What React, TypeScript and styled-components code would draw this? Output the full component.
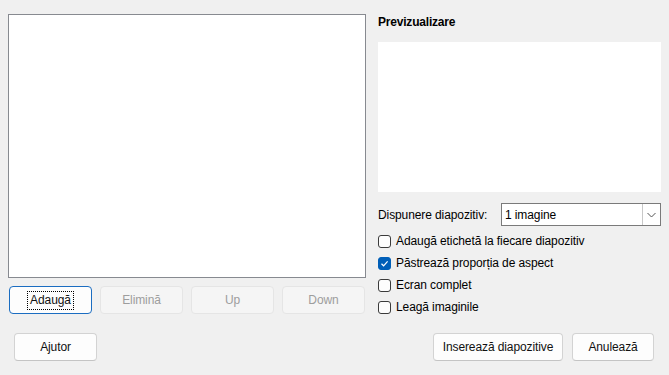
import React from "react";
import styled, { createGlobalStyle, css } from "styled-components";

const GlobalStyle = createGlobalStyle`
  html, body {
    margin: 0;
    padding: 0;
    background: #f0f0f0;
  }
  body {
    font-family: "Liberation Sans", Arial, sans-serif;
    font-size: 12px;
    letter-spacing: -0.1px;
    color: #000;
  }
`;

const Dialog = styled.div`
  width: 669px;
  height: 375px;
  box-sizing: border-box;
  background: #f0f0f0;
  display: flex;
  flex-direction: column;
`;

const Main = styled.div`
  display: flex;
  flex-direction: row;
  padding: 14px 8px 0 8px;
  gap: 12px;
`;

const LeftColumn = styled.div`
  width: 358px;
  display: flex;
  flex-direction: column;
  gap: 8px;
`;

const ListBox = styled.div`
  width: 358px;
  height: 264px;
  box-sizing: border-box;
  background: #fff;
  border: 1px solid #878a90;
`;

const ButtonRow = styled.div`
  display: flex;
  gap: 8px;
  padding-left: 1px;
`;

const Button = styled.button<{ $w?: number; $focused?: boolean }>`
  width: ${(p) => p.$w ?? 83}px;
  height: 28px;
  box-sizing: border-box;
  background: #fdfdfd;
  border: 1px solid #d3d3d3;
  border-bottom-color: #c4c4c4;
  border-radius: 4px;
  font-family: inherit;
  font-size: 12px;
  letter-spacing: inherit;
  color: #111;
  padding: 0;
  display: flex;
  align-items: center;
  justify-content: center;

  &:disabled {
    background: #f5f5f5;
    border-color: #e5e5e5;
    color: #9d9d9d;
  }

  ${(p) =>
    p.$focused &&
    css`
      border-color: #1b6dc1;
      span {
        outline: 1px dotted #000;
        outline-offset: 0px;
        padding: 2px 2px;
        line-height: 13px;
      }
    `}
`;

const RightColumn = styled.div`
  width: 283px;
  display: flex;
  flex-direction: column;
`;

const Title = styled.div`
  font-weight: bold;
  font-size: 12px;
  letter-spacing: -0.2px;
  margin-top: 1px;
  height: 27px;
`;

const Preview = styled.div`
  width: 283px;
  height: 150px;
  background: #fff;
`;

const LayoutRow = styled.div`
  display: flex;
  align-items: center;
  margin-top: 11px;
  height: 23px;
`;

const Label = styled.span`
  width: 123px;
`;

const Select = styled.div`
  width: 160px;
  height: 23px;
  box-sizing: border-box;
  background: #fff;
  border: 1px solid #7a7a7a;
  display: flex;
  align-items: center;
`;

const SelectValue = styled.span`
  flex: 1;
  padding-left: 3px;
`;

const SelectArrow = styled.span`
  width: 17px;
  height: 100%;
  border-left: 1px solid #c8c8c8;
  display: flex;
  align-items: center;
  justify-content: center;
`;

const Checks = styled.div`
  display: flex;
  flex-direction: column;
  margin-top: 4px;
`;

const CheckRow = styled.label`
  display: flex;
  align-items: center;
  height: 22px;
  gap: 5px;
`;

const Box = styled.span<{ $checked?: boolean }>`
  width: 13px;
  height: 13px;
  box-sizing: border-box;
  border-radius: 3px;
  border: 1px solid ${(p) => (p.$checked ? "#005fb8" : "#3b3b3b")};
  background: ${(p) => (p.$checked ? "#005fb8" : "#fdfdfd")};
  display: flex;
  align-items: center;
  justify-content: center;
`;

const Footer = styled.div`
  display: flex;
  justify-content: space-between;
  align-items: center;
  padding: 0 15px 0 14px;
  margin-top: auto;
  margin-bottom: 14px;
`;

const FooterRight = styled.div`
  display: flex;
  gap: 9px;
`;

function Check({ label, checked }: { label: string; checked?: boolean }) {
  return (
    <CheckRow>
      <Box $checked={checked}>
        {checked && (
          <svg width="9" height="9" viewBox="0 0 9 9">
            <path d="M1.5 4.8 L3.6 6.8 L7.6 2.4" fill="none" stroke="#fff" strokeWidth="1.2" />
          </svg>
        )}
      </Box>
      <span>{label}</span>
    </CheckRow>
  );
}

export default function App() {
  return (
    <>
      <GlobalStyle />
      <Dialog>
        <Main>
          <LeftColumn>
            <ListBox />
            <ButtonRow>
              <Button $focused>
                <span>Adaugă</span>
              </Button>
              <Button disabled>Elimină</Button>
              <Button disabled>Up</Button>
              <Button disabled>Down</Button>
            </ButtonRow>
          </LeftColumn>
          <RightColumn>
            <Title>Previzualizare</Title>
            <Preview />
            <LayoutRow>
              <Label>Dispunere diapozitiv:</Label>
              <Select>
                <SelectValue>1 imagine</SelectValue>
                <SelectArrow>
                  <svg width="9" height="6" viewBox="0 0 9 6">
                    <path d="M0.5 1 L4.5 5 L8.5 1" fill="none" stroke="#555" strokeWidth="1" />
                  </svg>
                </SelectArrow>
              </Select>
            </LayoutRow>
            <Checks>
              <Check label="Adaugă etichetă la fiecare diapozitiv" />
              <Check label="Păstrează proporția de aspect" checked />
              <Check label="Ecran complet" />
              <Check label="Leagă imaginile" />
            </Checks>
          </RightColumn>
        </Main>
        <Footer>
          <Button>Ajutor</Button>
          <FooterRight>
            <Button $w={130}>Inserează diapozitive</Button>
            <Button $w={82}>Anulează</Button>
          </FooterRight>
        </Footer>
      </Dialog>
    </>
  );
}
